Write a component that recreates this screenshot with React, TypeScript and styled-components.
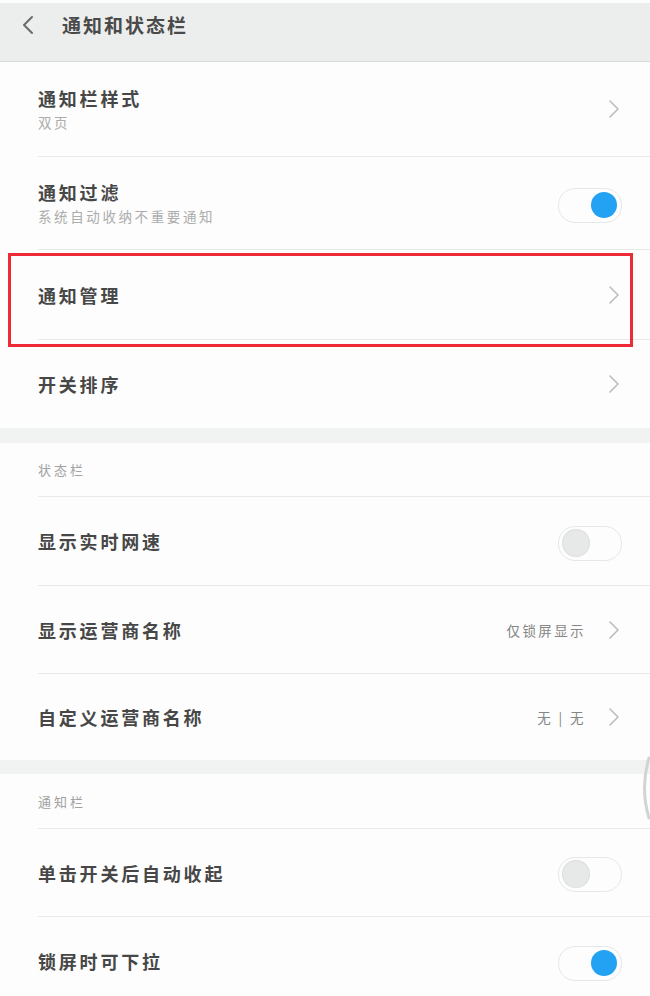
import styled, { createGlobalStyle } from 'styled-components';

const GlobalStyle = createGlobalStyle`
  html, body {
    margin: 0;
    padding: 0;
    background: #fcfdfc;
    font-family: "Noto Sans CJK SC", "Noto Sans", sans-serif;
  }
`;

type Item = {
  title: string;
  sub?: string;
  value?: string;
  toggle?: boolean;
  on?: boolean;
  h: number;
  divider?: boolean;
  highlight?: boolean;
};

const groupOne: Item[] = [
  { title: '通知栏样式', sub: '双页', h: 94, divider: true },
  { title: '通知过滤', sub: '系统自动收纳不重要通知', toggle: true, on: true, h: 92, divider: true },
  { title: '通知管理', h: 89, divider: true, highlight: true },
  { title: '开关排序', h: 88 },
];

const groupTwo: Item[] = [
  { title: '显示实时网速', toggle: true, on: false, h: 88, divider: true },
  { title: '显示运营商名称', value: '仅锁屏显示', h: 87, divider: true },
  { title: '自定义运营商名称', value: '无 | 无', h: 86 },
];

const groupThree: Item[] = [
  { title: '单击开关后自动收起', toggle: true, on: false, h: 87, divider: true },
  { title: '锁屏时可下拉', toggle: true, on: true, h: 88 },
];

const Chevron = () => (
  <svg width="12" height="20" viewBox="0 0 12 20">
    <path d="M2 2 L10 10 L2 18" fill="none" stroke="#bcbcbc" strokeWidth="1.6" strokeLinecap="round" strokeLinejoin="round" />
  </svg>
);

const Row = ({ item }: { item: Item }) => (
  <RowWrap divider={item.divider}>
    <RowInner h={item.h}>
      <TextCol>
        <Title>{item.title}</Title>
        {item.sub && <Sub>{item.sub}</Sub>}
      </TextCol>
      {item.value && <Value>{item.value}</Value>}
      {item.toggle ? (
        <Switch on={item.on}>
          <Knob on={item.on} />
        </Switch>
      ) : (
        <ChevronBox>
          <Chevron />
        </ChevronBox>
      )}
    </RowInner>
    {item.highlight && <Highlight />}
  </RowWrap>
);

const App = () => {
  return (
    <>
      <GlobalStyle />
      <Page>
        <Header>
          <BackBtn>
            <svg width="12" height="20" viewBox="0 0 12 20">
              <path d="M10 2 L2 10 L10 18" fill="none" stroke="#6a6a6a" strokeWidth="2" strokeLinecap="round" strokeLinejoin="round" />
            </svg>
          </BackBtn>
          <HeaderTitle>通知和状态栏</HeaderTitle>
        </Header>

        {groupOne.map((it) => (
          <Row key={it.title} item={it} />
        ))}

        <Band h={15} />
        <SectionHead h={53}>状态栏</SectionHead>
        {groupTwo.map((it) => (
          <Row key={it.title} item={it} />
        ))}

        <Band h={14} />
        <SectionHead h={54}>通知栏</SectionHead>
        {groupThree.map((it) => (
          <Row key={it.title} item={it} />
        ))}

        <ScrollEdge>
          <svg width="12" height="64" viewBox="0 0 12 64">
            <path d="M11 2 Q2 32 11 62" fill="none" stroke="#d2d4d3" strokeWidth="3" strokeLinecap="round" />
          </svg>
        </ScrollEdge>
      </Page>
    </>
  );
};

const Page = styled.div`
  position: relative;
  width: 650px;
  height: 996px;
  overflow: hidden;
  background: #fcfdfc;
`;

const Header = styled.div`
  display: flex;
  align-items: flex-start;
  height: 58px;
  margin-top: 3px;
  background: #eceeed;
  border-bottom: 1px solid #d9dbda;
  padding-left: 22px;
  box-sizing: content-box;
`;

const BackBtn = styled.div`
  display: flex;
  align-items: center;
  width: 40px;
  height: 20px;
  margin-top: 12px;
`;

const HeaderTitle = styled.div`
  font-size: 19px;
  font-weight: 700;
  letter-spacing: 2px;
  color: #4a4a4a;
  line-height: 26px;
  margin-top: 9px;
`;

const RowWrap = styled.div<{ divider?: boolean }>`
  position: relative;
  border-bottom: ${({ divider }) => (divider ? '1px solid #e8eae9' : 'none')};
  margin-left: 38px;
`;

const RowInner = styled.div<{ h: number }>`
  display: flex;
  align-items: center;
  height: ${({ h }) => h}px;
  padding-right: 28px;
`;

const TextCol = styled.div`
  flex: 1;
  display: flex;
  flex-direction: column;
  gap: 2px;
`;

const Title = styled.div`
  font-size: 18px;
  font-weight: 700;
  letter-spacing: 2.8px;
  color: #474747;
  line-height: 24px;
`;

const Sub = styled.div`
  font-size: 13.5px;
  letter-spacing: 2.6px;
  color: #acacac;
  line-height: 20px;
`;

const Value = styled.div`
  font-size: 13.5px;
  letter-spacing: 2.4px;
  color: #858585;
  margin-right: 22px;
`;

const ChevronBox = styled.div`
  display: flex;
  align-items: center;
  margin-right: 2px;
`;

const Switch = styled.div<{ on?: boolean }>`
  position: relative;
  width: 62px;
  height: 33px;
  border-radius: 17px;
  border: 1.5px solid #e6e8e7;
  background: #fdfdfd;
  margin-top: 4px;
`;

const Knob = styled.div<{ on?: boolean }>`
  position: absolute;
  top: 3px;
  left: ${({ on }) => (on ? '32px' : '4px')};
  width: 26px;
  height: 26px;
  border-radius: 50%;
  background: ${({ on }) => (on ? '#23a1f2' : '#e7e9e8')};
  box-shadow: ${({ on }) => (on ? 'none' : '0 0 0 1px #dcdedd')};
`;

const Highlight = styled.div`
  position: absolute;
  top: 3px;
  left: -30px;
  right: 17px;
  height: 88px;
  border: 3px solid #ee2a36;
  pointer-events: none;
`;

const Band = styled.div<{ h: number }>`
  height: ${({ h }) => h}px;
  background: #f1f3f2;
`;

const SectionHead = styled.div<{ h: number }>`
  display: flex;
  align-items: center;
  height: ${({ h }) => h}px;
  margin-left: 38px;
  border-bottom: 1px solid #e8eae9;
  font-size: 13px;
  letter-spacing: 3px;
  color: #a2a2a2;
`;

const ScrollEdge = styled.div`
  position: absolute;
  right: 0;
  top: 756px;
  width: 12px;
  height: 64px;
`;

export default App;
